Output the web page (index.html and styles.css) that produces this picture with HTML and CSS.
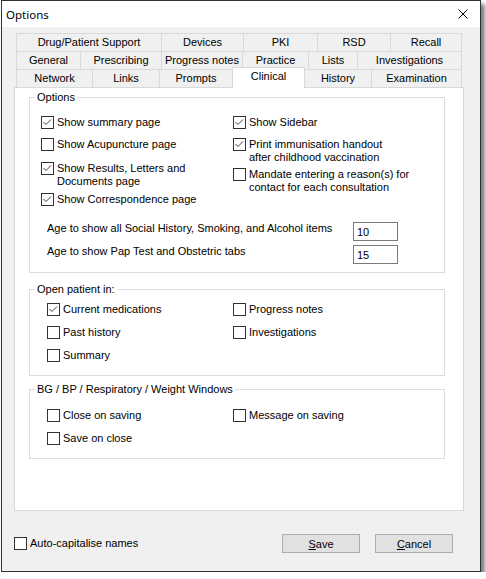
FILE: index.html
```html
<!DOCTYPE html>
<html lang="en">
<head>
    <meta charset="UTF-8">
    <title>Options</title>
    <link rel="stylesheet" href="styles.css">
</head>
<body>

<div class="window">
    <div class="titlebar">
        <span class="title">Options</span>
        <svg class="close" width="10" height="10" viewBox="0 0 10 10">
            <path d="M0.5 0.5L9.5 9.5M9.5 0.5L0.5 9.5" stroke="#000" stroke-width="1" fill="none"/>
        </svg>
    </div>

    <div class="content">
        <div class="tabs">
            <div class="tab-row row-1">
                <div class="tab">Drug/Patient Support</div>
                <div class="tab">Devices</div>
                <div class="tab">PKI</div>
                <div class="tab">RSD</div>
                <div class="tab">Recall</div>
            </div>
            <div class="tab-row row-2">
                <div class="tab">General</div>
                <div class="tab">Prescribing</div>
                <div class="tab">Progress notes</div>
                <div class="tab">Practice</div>
                <div class="tab">Lists</div>
                <div class="tab">Investigations</div>
            </div>
            <div class="tab-row row-3">
                <div class="tab">Network</div>
                <div class="tab">Links</div>
                <div class="tab">Prompts</div>
                <div class="tab active">Clinical</div>
                <div class="tab">History</div>
                <div class="tab">Examination</div>
            </div>
        </div>

        <div class="panel">
            <fieldset class="group group-options">
                <legend>Options</legend>
                <div class="group-body">
                    <div class="columns">
                        <div class="col col-left">
                            <label class="check"><span class="box"><svg viewBox="0 0 11 11"><polyline points="1.5,5 4,7.5 9,2.5"/></svg></span><span>Show summary page</span></label>
                            <label class="check gap-9"><span class="box"></span><span>Show Acupuncture page</span></label>
                            <label class="check gap-11"><span class="box"><svg viewBox="0 0 11 11"><polyline points="1.5,5 4,7.5 9,2.5"/></svg></span><span>Show Results, Letters and<br>Documents page</span></label>
                            <label class="check gap-5"><span class="box"><svg viewBox="0 0 11 11"><polyline points="1.5,5 4,7.5 9,2.5"/></svg></span><span>Show Correspondence page</span></label>
                        </div>
                        <div class="col">
                            <label class="check"><span class="box"><svg viewBox="0 0 11 11"><polyline points="1.5,5 4,7.5 9,2.5"/></svg></span><span>Show Sidebar</span></label>
                            <label class="check gap-9"><span class="box"><svg viewBox="0 0 11 11"><polyline points="1.5,5 4,7.5 9,2.5"/></svg></span><span>Print immunisation handout<br>after childhood vaccination</span></label>
                            <label class="check gap-4"><span class="box"></span><span>Mandate entering a reason(s) for<br>contact for each consultation</span></label>
                        </div>
                    </div>

                    <div class="age-row first">
                        <span>Age to show all Social History, Smoking, and Alcohol items</span>
                        <input class="num" type="text" value="10">
                    </div>
                    <div class="age-row">
                        <span>Age to show Pap Test and Obstetric tabs</span>
                        <input class="num" type="text" value="15">
                    </div>
                </div>
            </fieldset>

            <fieldset class="group group-open">
                <legend>Open patient in:</legend>
                <div class="group-body grid">
                    <label class="check"><span class="box"><svg viewBox="0 0 11 11"><polyline points="1.5,5 4,7.5 9,2.5"/></svg></span><span>Current medications</span></label>
                    <label class="check"><span class="box"></span><span>Progress notes</span></label>
                    <label class="check"><span class="box"></span><span>Past history</span></label>
                    <label class="check"><span class="box"></span><span>Investigations</span></label>
                    <label class="check"><span class="box"></span><span>Summary</span></label>
                </div>
            </fieldset>

            <fieldset class="group group-windows">
                <legend>BG / BP / Respiratory / Weight Windows</legend>
                <div class="group-body grid">
                    <label class="check"><span class="box"></span><span>Close on saving</span></label>
                    <label class="check"><span class="box"></span><span>Message on saving</span></label>
                    <label class="check"><span class="box"></span><span>Save on close</span></label>
                </div>
            </fieldset>
        </div>

        <div class="footer">
            <label class="check"><span class="box"></span><span>Auto-capitalise names</span></label>
            <div class="buttons">
                <button class="btn"><u>S</u>ave</button>
                <button class="btn"><u>C</u>ancel</button>
            </div>
        </div>
    </div>
</div>

</body>
</html>
```

FILE: styles.css
```css
/* Reset */
* {
    box-sizing: border-box;
}

body {
    margin: 0;
    background-color: #fff;
    font-family: "Liberation Sans", Arial, sans-serif;
    font-size: 11px;
    color: #000;
}

/* Dialog frame */
.window {
    width: 480px;
    height: 572px;
    margin-left: 1px;
    border: 1px solid #333;
    background-color: #f0f0f0;
    box-shadow: 4px 4px 4px rgba(0, 0, 0, 0.5);
}

.titlebar {
    height: 26px;
    padding: 0 12px 0 4px;
    display: flex;
    align-items: center;
    justify-content: space-between;
    background-color: #fff;
}

.title {
    font-family: "Noto Sans", "Open Sans", sans-serif;
    font-size: 11.5px;
}

.close {
    display: block;
}

.content {
    padding: 6px 16px 0 12px;
}

/* Tab strip, three rows */
.tab-row {
    display: grid;
    grid-template-rows: 18px;
    margin: 0 2px;
}

.row-1 {
    grid-template-columns: 145px 82px 74px 73px 72px;
}

.row-2 {
    grid-template-columns: 64px 81px 81px 66px 49px 105px;
}

.row-3 {
    grid-template-columns: 76px 67px 73px 72px 67px 91px;
    margin: 0;
    padding: 0 2px;
    border-bottom: 1px solid #d9d9d9;
}

.tab {
    height: 18px;
    border-top: 1px solid #d9d9d9;
    border-left: 1px solid #d9d9d9;
    background-color: #f0f0f0;
    line-height: 17px;
    text-align: center;
    white-space: nowrap;
}

.tab:last-child {
    border-right: 1px solid #d9d9d9;
}

.tab.active {
    height: 21px;
    margin-top: -2px;
    margin-right: -1px;
    border-right: 1px solid #d9d9d9;
    background-color: #fff;
}

/* Tab page */
.panel {
    height: 423px;
    padding: 3px 18px 0 14px;
    border: 1px solid #d9d9d9;
    border-top: none;
    background-color: #fff;
}

.group {
    margin: 0;
    padding: 0;
    min-width: 0;
    border: 1px solid #dcdcdc;
}

.group legend {
    margin-left: 5px;
    padding: 0 2px;
    line-height: 13px;
}

.group-options .group-body {
    padding: 12px 0 8px 11px;
}

.group-open {
    margin-top: 10px;
}

.group-open .group-body {
    padding: 7px 0 13px 17px;
}

.group-windows {
    margin-top: 7px;
}

.group-windows .group-body {
    padding: 13px 0 13px 17px;
}

.grid {
    display: grid;
    grid-template-columns: 186px auto;
    row-gap: 10px;
}

/* Checkboxes */
.check {
    display: flex;
    align-items: flex-start;
    gap: 3px;
    line-height: 13px;
    white-space: nowrap;
}

.box {
    width: 13px;
    height: 13px;
    flex-shrink: 0;
    border: 1px solid #333;
    background-color: #fff;
}

.box svg {
    display: block;
    width: 11px;
    height: 11px;
    fill: none;
    stroke: #3c3c3c;
    stroke-width: 1;
}

.columns {
    display: flex;
}

.col {
    display: flex;
    flex-direction: column;
}

.col-left {
    width: 192px;
}

.gap-4 { margin-top: 4px; }
.gap-5 { margin-top: 5px; }
.gap-9 { margin-top: 9px; }
.gap-11 { margin-top: 11px; }

/* Age fields */
.age-row {
    display: flex;
    align-items: flex-start;
    justify-content: space-between;
    width: 351px;
    margin: 4px 0 0 6px;
    line-height: 13px;
}

.age-row.first {
    margin-top: 16px;
}

.num {
    width: 45px;
    height: 19px;
    padding: 0 3px;
    border: 1px solid #7a7a7a;
    background-color: #fff;
    font-family: "Liberation Sans", Arial, sans-serif;
    font-size: 11px;
    color: #000;
    outline: none;
}

/* Bottom bar */
.footer {
    display: flex;
    align-items: center;
    justify-content: space-between;
    margin-top: 23px;
    padding-right: 11px;
}

.buttons {
    display: flex;
    gap: 15px;
}

.btn {
    width: 78px;
    height: 19px;
    padding: 0;
    border: 1px solid #adadad;
    background-color: #e1e1e1;
    font-family: "Liberation Sans", Arial, sans-serif;
    font-size: 11px;
    color: #000;
}
```
